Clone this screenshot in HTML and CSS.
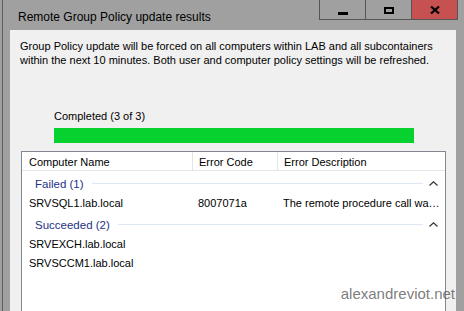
FILE: index.html
```html
<!DOCTYPE html>
<html lang="en">
<head>
  <meta charset="UTF-8">
  <meta name="viewport" content="width=device-width, initial-scale=1.0">
  <title>Remote Group Policy update results</title>
  <link rel="stylesheet" href="styles.css">
</head>
<body>
  <div class="window">
    <div class="titlebar">
      <span class="title">Remote Group Policy update results</span>
      <div class="caption-buttons">
        <span class="cbtn"><i class="glyph-min"></i></span>
        <span class="cbtn"><i class="glyph-max"></i></span>
        <span class="cbtn close">
          <svg width="10" height="8" viewBox="0 0 10 8"><path d="M1 0.5 L9 7.5 M9 0.5 L1 7.5" stroke="#000" stroke-width="2.2" fill="none"/></svg>
        </span>
      </div>
    </div>

    <div class="content">
      <p class="intro">Group Policy update will be forced on all computers within LAB and all subcontainers<br>within the next 10 minutes. Both user and computer policy settings will be refreshed.</p>

      <div class="progress-block">
        <div class="progress-label">Completed (3 of 3)</div>
        <div class="progress"><div class="progress-fill" style="width: 100%"></div></div>
      </div>

      <div class="listview">
        <div class="lv-row lv-header">
          <span class="cell">Computer Name</span>
          <span class="cell">Error Code</span>
          <span class="cell">Error Description</span>
        </div>

        <div class="lv-group">
          <span class="group-name">Failed (1)</span>
          <span class="group-line"></span>
          <svg class="chevron" width="9" height="5" viewBox="0 0 9 5"><path d="M0.5 4.5 L4.5 0.8 L8.5 4.5" stroke="#333" stroke-width="1.2" fill="none"/></svg>
        </div>
        <div class="lv-row">
          <span class="cell">SRVSQL1.lab.local</span>
          <span class="cell">8007071a</span>
          <span class="cell">The remote procedure call wa…</span>
        </div>

        <div class="lv-group">
          <span class="group-name">Succeeded (2)</span>
          <span class="group-line"></span>
          <svg class="chevron" width="9" height="5" viewBox="0 0 9 5"><path d="M0.5 4.5 L4.5 0.8 L8.5 4.5" stroke="#333" stroke-width="1.2" fill="none"/></svg>
        </div>
        <div class="lv-row">
          <span class="cell">SRVEXCH.lab.local</span>
          <span class="cell"></span>
          <span class="cell"></span>
        </div>
        <div class="lv-row">
          <span class="cell">SRVSCCM1.lab.local</span>
          <span class="cell"></span>
          <span class="cell"></span>
        </div>
      </div>
    </div>
  </div>

  <div class="watermark">alexandreviot.net</div>
</body>
</html>
```

FILE: styles.css
```css
body {
  margin: 0;
  height: 311px;
  overflow: hidden;
  position: relative;
  background-color: #a0a0a0;
  font-family: 'Liberation Sans', Arial, sans-serif;
  font-size: 11px;
  color: #000;
}
.window {
  margin-left: 2px;
  border-left: 1px solid #5e5e5e;
  height: 311px;
  display: flex;
  flex-direction: column;
}
.titlebar {
  height: 30px;
  display: flex;
  align-items: flex-start;
}
.title {
  padding: 10px 0 0 15px;
  font-size: 12px;
}
.caption-buttons {
  margin-left: auto;
  margin-right: 6px;
  display: flex;
}
.cbtn {
  width: 45px;
  height: 19px;
  border-left: 1px solid #555;
  border-bottom: 1px solid #555;
  display: flex;
  align-items: center;
  justify-content: center;
}
.cbtn.close {
  background-color: #c75050;
  border-right: 1px solid #555;
}
.glyph-min {
  width: 10px;
  height: 3px;
  margin-top: 7px;
  background: #000;
}
.glyph-max {
  width: 6px;
  height: 3px;
  border: 2px solid #000;
  margin-top: 1px;
}
.content {
  flex: 1;
  margin: 0 8px 0 7px;
  background-color: #f0f0f0;
  display: flex;
  flex-direction: column;
}
.intro {
  margin: 0;
  padding: 9px 0 0 10px;
  line-height: 14px;
}
.progress-block {
  margin: 42px 0 0 44px;
}
.progress-label {
  line-height: 14px;
}
.progress {
  margin-top: 5px;
  width: 360px;
  height: 15px;
  background: #e6e6e6;
}
.progress-fill {
  height: 100%;
  background-color: #06d12f;
}
.listview {
  flex: 1;
  margin: 8px 10px 0 11px;
  background: #fff;
  border: 1px solid #828790;
  border-bottom: none;
}
.lv-row {
  display: grid;
  grid-template-columns: 170px 85px 1fr;
  height: 19px;
  align-items: center;
}
.lv-row .cell {
  padding-left: 7px;
  white-space: nowrap;
  overflow: hidden;
}
.lv-row .cell + .cell {
  padding-left: 6px;
}
.lv-header {
  height: 18px;
  border-bottom: 1px solid #e5e5e5;
  align-items: stretch;
}
.lv-header .cell {
  display: flex;
  align-items: center;
  padding-top: 1px;
}
.lv-header .cell + .cell {
  border-left: 1px solid #e5e5e5;
}
.lv-group {
  height: 19px;
  display: flex;
  align-items: center;
  padding: 0 7px 0 13px;
  color: #1e3287;
}
.lv-row + .lv-group {
  margin-top: 3px;
}
.group-name {
  font-size: 11.5px;
}
.group-line {
  flex: 1;
  height: 1px;
  margin: 0 6px 0 8px;
  background-color: #dce8f5;
}
.chevron {
  margin: 0 0 1px 0;
}
.watermark {
  position: absolute;
  right: 9px;
  bottom: 9px;
  font-size: 15px;
  color: rgba(90, 90, 90, 0.8);
}
```
